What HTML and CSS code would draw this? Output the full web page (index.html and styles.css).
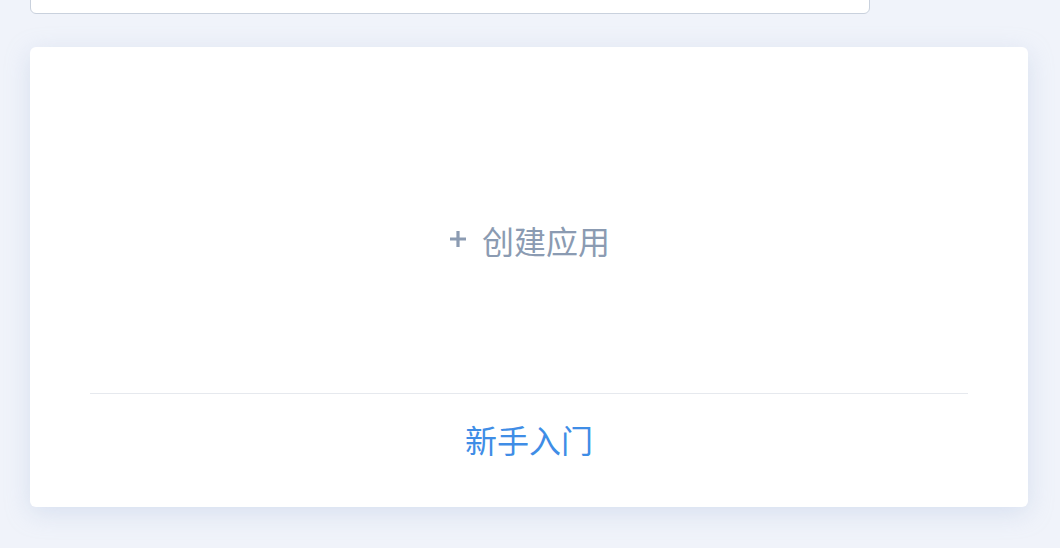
FILE: index.html
```html
<!DOCTYPE html>
<html lang="zh-CN">
<head>
    <meta charset="UTF-8">
    <meta name="viewport" content="width=device-width, initial-scale=1.0">
    <title>应用</title>
    <link rel="stylesheet" href="styles.css">
</head>
<body>
    <div class="search-box"></div>

    <div class="app-card">
        <div class="create-area">
            <a href="#" class="btn-create">
                <svg class="plus" width="20" height="20" viewBox="0 0 20 20"><path d="M10 2v16M2 10h16" stroke="currentColor" stroke-width="3.2" fill="none"/></svg>
                创建应用
            </a>
        </div>
        <div class="card-footer">
            <a href="#" class="guide-link">新手入门</a>
        </div>
    </div>
</body>
</html>
```

FILE: styles.css
```css
html {
    background-color: #f0f3fa;
}
body {
    font-family: "Noto Sans CJK SC", "Noto Sans", sans-serif;
    margin: 0;
    padding: 0 32px 40px 30px;
}
.search-box {
    width: 838px;
    height: 40px;
    margin-top: -28px;
    background-color: #fff;
    border: 1px solid #c9d1dd;
    border-radius: 6px;
}
.app-card {
    margin-top: 33px;
    height: 460px;
    background-color: #fff;
    border-radius: 6px;
    box-shadow: 0 6px 24px rgba(170, 190, 220, 0.35);
    padding: 0 60px;
    box-sizing: border-box;
    display: flex;
    flex-direction: column;
}
.create-area {
    height: 347px;
    padding-top: 40px;
    box-sizing: border-box;
    border-bottom: 1px solid #e6e9ee;
    display: flex;
    align-items: center;
    justify-content: center;
}
.btn-create {
    color: #8b9bb2;
    font-size: 32px;
    text-decoration: none;
    display: flex;
    align-items: center;
    gap: 14px;
}
.plus {
    margin-top: -2px;
}
.card-footer {
    padding-top: 25px;
    text-align: center;
}
.guide-link {
    color: #3f8de6;
    font-size: 32px;
    line-height: 40px;
    text-decoration: none;
}
```
